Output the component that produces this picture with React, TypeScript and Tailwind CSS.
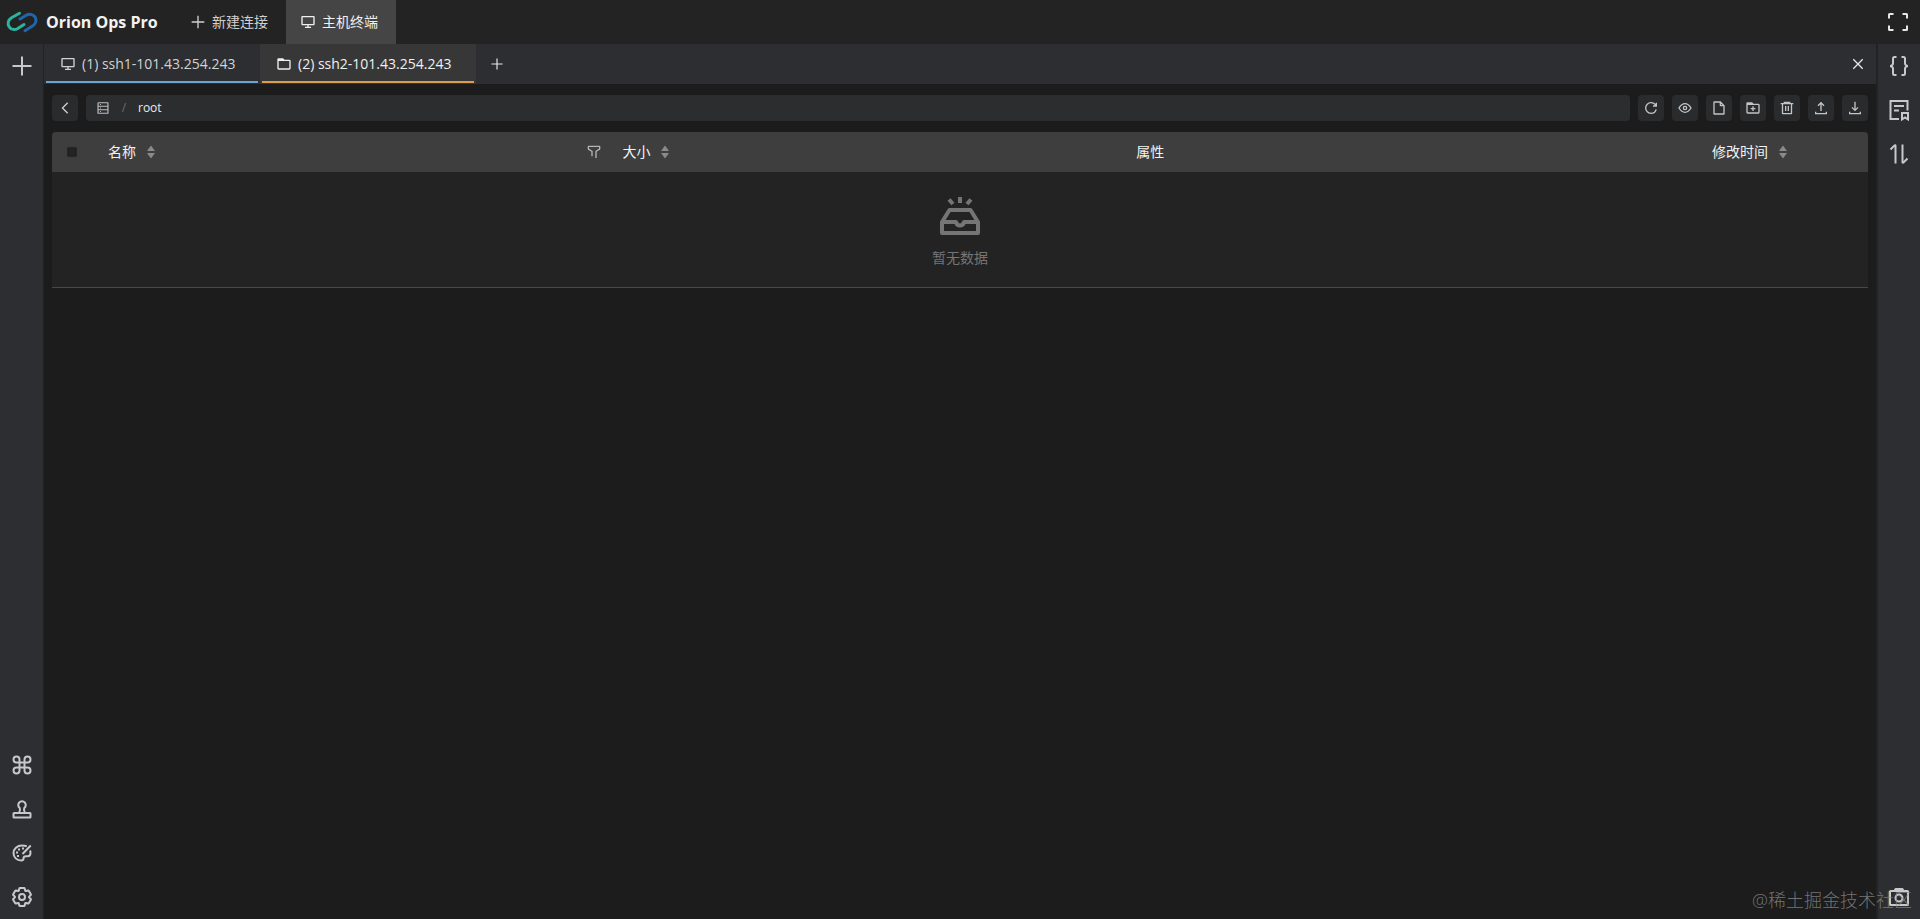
import type { ReactNode } from "react";
import clsx from "clsx";

interface IconProps {
  className?: string;
  children: ReactNode;
}

// Base outline icon on a 48 grid
function Icon({ className = "size-6", children }: IconProps) {
  return (
    <svg
      viewBox="0 0 48 48"
      fill="none"
      stroke="currentColor"
      strokeWidth="4"
      className={clsx("shrink-0", className)}
      aria-hidden="true"
    >
      {children}
    </svg>
  );
}

const folderPath =
  "M6 13h18l-2.527-3.557a1.077 1.077 0 0 0-.88-.443H7.06C6.474 9 6 9.448 6 10v4Zm0 0h33.882c1.17 0 2.118.895 2.118 2v21c0 1.105-.948 3-2.118 3H8.118C6.948 39 6 38.105 6 37V13Z";

const icons = {
  plus: <path d="M5 24h38M24 5v38" />,
  desktop: (
    <path d="M24 32v8m0 0h-9m9 0h9M7 32h34a1 1 0 0 0 1-1V9a1 1 0 0 0-1-1H7a1 1 0 0 0-1 1v22a1 1 0 0 0 1 1Z" />
  ),
  folder: <path d={folderPath} />,
  folderAdd: (
    <>
      <path d="M24 19v14m-7-7h14" />
      <path d={folderPath} />
    </>
  ),
  close: (
    <path d="M9.857 9.858 24 24m0 0 14.142 14.142M24 24 38.142 9.858M24 24 9.857 38.142" />
  ),
  left: <path d="M32 8.4 16.444 23.956 32 39.513" />,
  storage: (
    <path d="M7 18h34v12H7V18ZM40 6H8a1 1 0 0 0-1 1v11h34V7a1 1 0 0 0-1-1ZM7 30h34v11a1 1 0 0 1-1 1H8a1 1 0 0 1-1-1V30ZM14 12h3M14 24h3M14 36h3" />
  ),
  filter: (
    <path d="M30 42V22.549a1 1 0 0 1 .463-.844l10.074-6.41A1 1 0 0 0 41 14.45V8a1 1 0 0 0-1-1H8a1 1 0 0 0-1 1v6.451a1 1 0 0 0 .463.844l10.074 6.41a1 1 0 0 1 .463.844V37" />
  ),
  refresh: (
    <path d="M38.837 18C36.463 12.136 30.715 8 24 8 15.163 8 8 15.163 8 24s7.163 16 16 16c7.455 0 13.72-5.1 15.496-12M40 8v10H30" />
  ),
  eye: (
    <>
      <path d="M24 37c6.627 0 12.627-4.333 18-13-5.373-8.667-11.373-13-18-13-6.627 0-12.627 4.333-18 13 5.373 8.667 11.373 13 18 13Z" />
      <path d="M29 24a5 5 0 1 1-10 0 5 5 0 0 1 10 0Z" />
    </>
  ),
  file: (
    <path d="M38.5 17H29a1 1 0 0 1-1-1V6.5m0-.5H10a1 1 0 0 0-1 1v34a1 1 0 0 0 1 1h28a1 1 0 0 0 1-1V17L28 6Z" />
  ),
  trash: (
    <path d="M5 11h5.5m0 0v29a1 1 0 0 0 1 1h25a1 1 0 0 0 1-1V11m-27 0H16m21.5 0H43m-5.5 0H32m-16 0V7h16v4m-16 0h16M20 18v15m8-15v15" />
  ),
  upload: (
    <path d="M14.93 17.071 24.001 8l9.071 9.071m-9.07 16.071v-25M40 35v6H8v-6" />
  ),
  download: (
    <path d="m33.072 22.071-9.07 9.071-9.072-9.07M24 5v26m16 4v6H8v-6" />
  ),
  fullscreen: (
    <path d="M42 17V9a1 1 0 0 0-1-1h-8M6 17V9a1 1 0 0 1 1-1h8m27 23v8a1 1 0 0 1-1 1h-8M6 31v8a1 1 0 0 0 1 1h8" />
  ),
  braces: (
    <path d="M19 6h-4a3 3 0 0 0-3 3v10c0 3-4.343 5-6 5 1.657 0 6 2 6 5v10a3 3 0 0 0 3 3h4M29 6h4a3 3 0 0 1 3 3v10c0 3 4.343 5 6 5-1.657 0-6 2-6 5v10a3 3 0 0 1-3 3h-4" />
  ),
  bookmark: (
    <path d="M14 16h20M14 25h10M24 42H7V6h34v19M30 30h12v13l-6-4-6 4V30Z" />
  ),
  swap: (
    <path
      transform="rotate(90 24 24)"
      d="M5 17h35.586c.89 0 1.337-1.077.707-1.707L33 7M43 31H7.414c-.89 0-1.337 1.077-.707 1.707L15 41"
    />
  ),
  command: (
    <path d="M29 19v-6a6 6 0 1 1 6 6h-6Zm0 0v10m0-10H19m10 10v6a6 6 0 1 0 6-6h-6Zm0 0H19m0-10v10m0-10v-6a6 6 0 1 0-6 6h6Zm0 10v6a6 6 0 1 1-6-6h6Z" />
  ),
  stamp: (
    <path d="M7 33a1 1 0 0 1 1-1h32a1 1 0 0 1 1 1v7a1 1 0 0 1-1 1H8a1 1 0 0 1-1-1v-7ZM18 32c2-4 3-7 1.500-10a7.500 7.500 0 1 1 9 0C27 25 28 28 30 32" />
  ),
  palette: (
    <>
      <path d="M33.500 10.500C31 9.500 27.500 9 24 9 14 9 7 15.500 7 24s6.500 15 15.500 15c4 0 4.500-1.500 4.500-4 0-3 1.500-4.500 5-4.500h3c3.500 0 6-2.500 6-6.500 0-2-.3-3.500-1-5" />
      <path d="M25 26 41.500 9" />
      <path d="M12 23h4M16 17h4M24 15h4M14 30h4" />
    </>
  ),
  settings: (
    <>
      <path d="M18.797 6.732A1 1 0 0 1 19.760 6h8.480a1 1 0 0 1 .964.732l1.285 4.628a1 1 0 0 0 1.213.7l4.651-1.200a1 1 0 0 1 1.116.468l4.240 7.344a1 1 0 0 1-.153 1.200L38.193 23.300a1 1 0 0 0 0 1.402l3.364 3.427a1 1 0 0 1 .153 1.200l-4.240 7.344a1 1 0 0 1-1.116.468l-4.650-1.200a1 1 0 0 0-1.214.7l-1.285 4.628a1 1 0 0 1-.964.732h-8.480a1 1 0 0 1-.963-.732L17.510 36.640a1 1 0 0 0-1.213-.7l-4.650 1.200a1 1 0 0 1-1.116-.468l-4.240-7.344a1 1 0 0 1 .153-1.200L9.809 24.700a1 1 0 0 0 0-1.402l-3.364-3.427a1 1 0 0 1-.153-1.200l4.240-7.344a1 1 0 0 1 1.116-.468l4.650 1.200a1 1 0 0 0 1.213-.7l1.286-4.628Z" />
      <path d="M30 24a6 6 0 1 1-12 0 6 6 0 0 1 12 0Z" />
    </>
  ),
  camera: (
    <path d="m33 12-1.862-3.724A.5.5 0 0 0 30.691 8H17.309a.5.5 0 0 0-.447.276L15 12m16 14a7 7 0 1 1-14 0 7 7 0 0 1 14 0ZM7 40h34a1 1 0 0 0 1-1V13a1 1 0 0 0-1-1H7a1 1 0 0 0-1 1v26a1 1 0 0 0 1 1Z" />
  ),
};

type IconName = keyof typeof icons;

interface Action {
  icon: IconName;
  label: string;
}

const sessions = [
  { icon: "desktop" as IconName, title: "(1) ssh1-101.43.254.243", active: false },
  { icon: "folder" as IconName, title: "(2) ssh2-101.43.254.243", active: true },
];

const fileActions: Action[] = [
  { icon: "refresh", label: "刷新" },
  { icon: "eye", label: "显示隐藏文件" },
  { icon: "file", label: "创建文件" },
  { icon: "folderAdd", label: "创建文件夹" },
  { icon: "trash", label: "删除" },
  { icon: "upload", label: "上传" },
  { icon: "download", label: "下载" },
];

const leftTop: Action[] = [{ icon: "plus", label: "新建连接" }];
const leftBottom: Action[] = [
  { icon: "command", label: "快捷键设置" },
  { icon: "stamp", label: "显示设置" },
  { icon: "palette", label: "主题设置" },
  { icon: "settings", label: "终端设置" },
];
const rightTop: Action[] = [
  { icon: "braces", label: "命令片段" },
  { icon: "bookmark", label: "路径书签" },
  { icon: "swap", label: "传输列表" },
];
const rightBottom: Action[] = [{ icon: "camera", label: "截图" }];

function Logo() {
  return (
    <svg
      viewBox="0 0 32 22"
      fill="none"
      strokeWidth="3"
      strokeLinecap="round"
      className="h-[22px] w-8 shrink-0"
      aria-hidden="true"
    >
      <path
        stroke="#2bb3a0"
        d="M13.500 2.300 5.500 6.800C2 8.800 1.200 13 3.200 15.800c2 2.900 5.600 3.400 8.600 1.700l6.200-4"
      />
      <path
        stroke="#1f66ad"
        d="m14 8 6.200-3.700c3-1.700 6.700-1.200 8.700 1.600 2 2.900 1.100 7-2.400 9.100l-7.500 4.700"
      />
    </svg>
  );
}

interface SideBarProps {
  top: Action[];
  bottom: Action[];
  name: string;
  className: string;
}

function SideBar({ top, bottom, name, className }: SideBarProps) {
  return (
    <nav
      aria-label={name}
      className={clsx(
        "flex w-11 shrink-0 flex-col justify-between bg-[#2c2e31] text-[#c6c8ca]",
        className,
      )}
    >
      {[top, bottom].map((group, i) => (
        <div key={i}>
          {group.map((item) => (
            <button
              key={item.icon}
              aria-label={item.label}
              className="flex h-11 w-full items-center justify-center hover:bg-white/10"
            >
              <Icon>{icons[item.icon]}</Icon>
            </button>
          ))}
        </div>
      ))}
    </nav>
  );
}

function Sorter() {
  return (
    <svg viewBox="0 0 8 14" className="h-3.5 w-2 fill-[#8a8a8a]" aria-hidden="true">
      <path d="M4 .5 8 6H0ZM4 13.500 0 8h8Z" />
    </svg>
  );
}

function EmptyState() {
  return (
    <div className="flex flex-col items-center gap-[11px] text-[#757575]">
      <svg
        viewBox="0 0 40 40"
        fill="none"
        stroke="currentColor"
        strokeWidth="4"
        className="size-10"
        aria-hidden="true"
      >
        <path d="M20 0v6M9 2.500l4 4.500M31 2.500 27 7" />
        <path
          strokeLinejoin="round"
          d="M2 25 9.500 13h21L38 25v11H2V25Zm0 0h14c.5 2.300 2 3.500 4 3.500s3.500-1.200 4-3.500h14"
        />
      </svg>
      <p className="text-sm">暂无数据</p>
    </div>
  );
}

export default function App() {
  return (
    <div className="relative flex min-h-screen flex-col bg-[#1c1c1d] font-['Open_Sans','Noto_Sans_CJK_SC',sans-serif] text-sm text-[#e6e6e6]">
      {/* Header */}
      <header className="flex h-11 items-center bg-[#232324]">
        <div className="flex w-44 shrink-0 items-center gap-2 pl-1.5">
          <Logo />
          <h1 className="text-base font-bold whitespace-nowrap text-[#f2f2f2]">
            Orion Ops Pro
          </h1>
        </div>
        <button className="flex h-full items-center gap-1.5 pr-[18px] pl-3.5 text-[#d0d0d0]">
          <Icon className="size-4">{icons.plus}</Icon>
          新建连接
        </button>
        <button className="flex h-full items-center gap-1.5 bg-[#454545] pr-[18px] pl-3.5 text-[#f0f0f0]">
          <Icon className="size-4">{icons.desktop}</Icon>
          主机终端
        </button>
        <button aria-label="全屏" className="ml-auto flex h-full w-11 items-center justify-center">
          <Icon>{icons.fullscreen}</Icon>
        </button>
      </header>

      <div className="flex flex-1">
        <SideBar
          name="左侧工具栏"
          top={leftTop}
          bottom={leftBottom}
          className="shadow-[inset_-1px_0_#222325]"
        />

        <main className="min-w-0 flex-1">
          {/* Session tabs */}
          <div className="flex h-10 items-center bg-[#2c2e31]">
            {sessions.map((tab) => (
              <button
                key={tab.title}
                className={clsx(
                  "h-full w-[216px] px-0.5 pb-px",
                  tab.active ? "bg-[#373737] text-[#f0f0f0]" : "text-[#d2d2d2]",
                )}
              >
                <span
                  className={clsx(
                    "flex h-full items-center gap-1.5 border-b-2 pt-0.5 pl-3.5 whitespace-nowrap",
                    tab.active ? "border-[#dd9d4e]" : "border-[#6ba3d6]",
                  )}
                >
                  <Icon className="size-4">{icons[tab.icon]}</Icon>
                  {tab.title}
                </span>
              </button>
            ))}
            <button
              aria-label="新建标签"
              className="flex h-full w-[42px] items-center justify-center"
            >
              <Icon className="size-3.5">{icons.plus}</Icon>
            </button>
            <button
              aria-label="关闭"
              className="ml-auto flex h-full w-9 items-center justify-center"
            >
              <Icon className="size-4">{icons.close}</Icon>
            </button>
          </div>

          <div className="px-2 pt-[11px]">
            {/* Path and file actions */}
            <div className="flex gap-2">
              <button
                aria-label="返回上级"
                className="flex size-[26px] items-center justify-center rounded-sm bg-[#2a2b2d] text-[#cfcfcf]"
              >
                <Icon className="size-4">{icons.left}</Icon>
              </button>
              <div className="flex h-[26px] flex-1 items-center rounded-sm bg-[#2c2d2f] px-2.5 text-xs">
                <a href="#root" aria-label="根目录" className="text-[#bdbdbd]">
                  <Icon className="size-3.5">{icons.storage}</Icon>
                </a>
                <span className="w-7 text-center text-[#6e6e6e]">/</span>
                <a href="#root" className="text-[#ececec]">
                  root
                </a>
              </div>
              {fileActions.map((item) => (
                <button
                  key={item.icon}
                  aria-label={item.label}
                  className="flex size-[26px] items-center justify-center rounded-sm bg-[#2a2b2d] text-[#c4c4c4]"
                >
                  <Icon className="size-4">{icons[item.icon]}</Icon>
                </button>
              ))}
            </div>

            {/* File table */}
            <table className="mt-[11px] w-full table-fixed border-collapse">
              <thead>
                <tr className="h-10 text-left text-[#f2f2f2]">
                  <th className="w-10 rounded-tl-sm bg-[#3e3e3e]">
                    <input
                      type="checkbox"
                      aria-label="全选"
                      className="mx-auto block size-2.5 appearance-none rounded-xs bg-[#232324]"
                    />
                  </th>
                  <th className="bg-[#3e3e3e] pr-1 pl-4 font-normal">
                    <div className="flex items-center gap-[11px]">
                      名称
                      <Sorter />
                      <button aria-label="筛选" className="ml-auto text-[#b5b5b5]">
                        <Icon className="size-4">{icons.filter}</Icon>
                      </button>
                    </div>
                  </th>
                  <th className="w-[28.3%] bg-[#3e3e3e] px-4 font-normal">
                    <div className="flex items-center gap-[11px]">
                      大小
                      <Sorter />
                    </div>
                  </th>
                  <th className="w-[31.7%] bg-[#3e3e3e] px-4 font-normal">属性</th>
                  <th className="w-[172px] rounded-tr-sm bg-[#3e3e3e] px-4 font-normal">
                    <div className="flex items-center gap-[11px]">
                      修改时间
                      <Sorter />
                    </div>
                  </th>
                </tr>
              </thead>
              <tbody>
                <tr className="border-b border-[#484849] bg-[#232324]">
                  <td colSpan={5} className="h-[115px] pt-1.5">
                    <EmptyState />
                  </td>
                </tr>
              </tbody>
            </table>
          </div>
        </main>

        <SideBar
          name="右侧工具栏"
          top={rightTop}
          bottom={rightBottom}
          className="border-l-2 border-[#222325]"
        />
      </div>

      <p className="pointer-events-none absolute right-2 bottom-[5px] text-lg font-light text-[#8a8a8a]/80">
        @稀土掘金技术社区
      </p>
    </div>
  );
}
